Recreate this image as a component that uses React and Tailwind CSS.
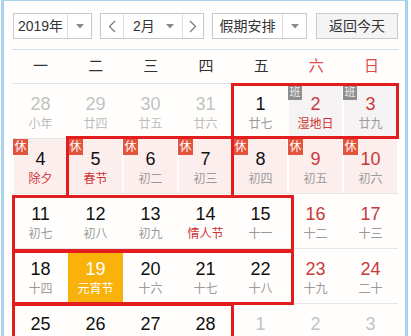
import React from 'react';

const FONT = { fontFamily: '"Liberation Sans", "Noto Sans CJK SC", sans-serif' };

const Caret = () => (
  <svg width="8" height="5" viewBox="0 0 8 5" className="block">
    <path d="M0 0 L8 0 L4 4.5 Z" fill="#8a8a8a" />
  </svg>
);

const Chevron = ({ dir }) => (
  <svg width="8" height="13" viewBox="0 0 8 13" className="block">
    <polyline
      points={dir === 'left' ? '7,1 1.5,6.5 7,12' : '1,1 6.5,6.5 1,12'}
      fill="none"
      stroke="#777"
      strokeWidth="1.2"
    />
  </svg>
);

const WEEK = ['一', '二', '三', '四', '五', '六', '日'];

// kind: o = other month, w = workday (班), r = rest (休), s = selected
const ROWS = [
  [
    { d: 28, l: '小年', k: 'o' },
    { d: 29, l: '廿四', k: 'o' },
    { d: 30, l: '廿五', k: 'o' },
    { d: 31, l: '廿六', k: 'o' },
    { d: 1, l: '廿七' },
    { d: 2, l: '湿地日', k: 'w', red: true, fest: true },
    { d: 3, l: '廿九', k: 'w', red: true },
  ],
  [
    { d: 4, l: '除夕', k: 'r', fest: true },
    { d: 5, l: '春节', k: 'r', fest: true },
    { d: 6, l: '初二', k: 'r' },
    { d: 7, l: '初三', k: 'r' },
    { d: 8, l: '初四', k: 'r' },
    { d: 9, l: '初五', k: 'r', red: true },
    { d: 10, l: '初六', k: 'r', red: true },
  ],
  [
    { d: 11, l: '初七' },
    { d: 12, l: '初八' },
    { d: 13, l: '初九' },
    { d: 14, l: '情人节', fest: true },
    { d: 15, l: '十一' },
    { d: 16, l: '十二', red: true },
    { d: 17, l: '十三', red: true },
  ],
  [
    { d: 18, l: '十四' },
    { d: 19, l: '元宵节', k: 's' },
    { d: 20, l: '十六' },
    { d: 21, l: '十七' },
    { d: 22, l: '十八' },
    { d: 23, l: '十九', red: true },
    { d: 24, l: '二十', red: true },
  ],
  [
    { d: 25, l: '廿一' },
    { d: 26, l: '廿二' },
    { d: 27, l: '廿三' },
    { d: 28, l: '廿四' },
    { d: 1, l: '廿五', k: 'o' },
    { d: 2, l: '廿六', k: 'o' },
    { d: 3, l: '廿七', k: 'o' },
  ],
];

const Cell = ({ c }) => {
  let bg = '';
  if (c.k === 'r') bg = 'bg-[#fdeeee]';
  if (c.k === 'w') bg = 'bg-[#f5f3f3]';
  if (c.k === 's') bg = 'bg-[#f8b20a]';

  let num = 'text-[#111]';
  if (c.red) num = 'text-[#c9383a]';
  if (c.k === 'o') num = 'text-[#c2c2c2]';
  if (c.k === 's') num = 'text-white';

  let lun = 'text-[#9a9a9a]';
  if (c.fest) lun = 'text-[#cf3434]';
  if (c.k === 'o') lun = 'text-[#bdbdbd]';
  if (c.k === 's') lun = 'text-white';

  return (
    <div className={`relative h-full ${c.k === 's' ? '' : 'px-px'}`}>
      <div className={`h-full flex flex-col items-center pt-[9px] ${bg}`}>
        <span className={`text-[18px] leading-[22px] ${num}`}>{c.d}</span>
        <span className={`text-[12px] leading-[16px] mt-px ${lun}`}>{c.l}</span>
      </div>
      {c.k === 'r' && (
        <span className="absolute left-0 top-0 w-[15px] h-[16px] bg-[#e2553d] text-white text-[12px] leading-[16px] text-center">
          休
        </span>
      )}
      {c.k === 'w' && (
        <span className="absolute left-0 top-[1px] w-[14px] h-[15px] bg-[#8e8e8e] text-[#eee] text-[11px] leading-[15px] text-center">
          班
        </span>
      )}
    </div>
  );
};

const Box = ({ cls }) => (
  <div className={`absolute border-[3px] border-[#e31d1d] pointer-events-none ${cls}`} />
);

export default function App() {
  return (
    <div className="w-[411px] h-[336px] overflow-hidden bg-white" style={FONT}>
      <div className="ml-px w-[407px] h-full border-x-[3px] border-t border-[#a9d2ef] bg-[#fffefc] pl-[9px] pt-[12px]">
        {/* toolbar */}
        <div className="flex items-center h-[26px] text-[14px] text-[#333]">
          <div className="flex w-[79px] h-full border border-[#c8c8c8] bg-white">
            <div className="flex-1 flex items-center justify-center border-r border-[#ddd]">2019年</div>
            <div className="w-[23px] flex items-center justify-center"><Caret /></div>
          </div>
          <div className="flex ml-[8px] w-[104px] h-full border border-[#c8c8c8] bg-white">
            <div className="w-[23px] flex items-center justify-center border-r border-[#ddd]"><Chevron dir="left" /></div>
            <div className="flex-1 flex items-center pl-[9px] border-r border-[#ddd]">
              <span>2月</span>
              <span className="ml-auto mr-[8px]"><Caret /></span>
            </div>
            <div className="w-[20px] flex items-center justify-center"><Chevron dir="right" /></div>
          </div>
          <div className="flex ml-[8px] w-[95px] h-full border border-[#c8c8c8] bg-white">
            <div className="flex-1 flex items-center justify-center border-r border-[#ddd]">假期安排</div>
            <div className="w-[23px] flex items-center justify-center"><Caret /></div>
          </div>
          <div className="ml-[9px] w-[82px] h-full border border-[#c8c8c8] bg-[#f4f4f4] flex items-center justify-center">
            返回今天
          </div>
        </div>

        <div className="mt-[10px] -ml-px w-[387px] border-t border-[#cddfea]" />

        {/* week header */}
        <div className="-ml-px w-[387px] h-[34px] border-b border-[#e2e2e2] grid grid-cols-7 pl-px">
          {WEEK.map((w, i) => (
            <div
              key={w}
              className={`flex items-center justify-center text-[15px] ${i > 4 ? 'text-[#e04848]' : 'text-[#333]'}`}
            >
              {w}
            </div>
          ))}
        </div>

        {/* days */}
        <div className="relative w-[385px]">
          {ROWS.map((row, ri) => (
            <div key={ri} className="grid grid-cols-7 h-[55px] border-b border-[#e6e6e6]">
              {row.map((c, ci) => (
                <Cell key={ci} c={c} />
              ))}
            </div>
          ))}
          <Box cls="left-[218px] top-[-1px] w-[168px] h-[56px]" />
          <Box cls="left-[53px] top-[52px] w-[168px] h-[62px]" />
          <Box cls="left-[-1px] top-[111px] w-[282px] h-[57px]" />
          <Box cls="left-[-1px] top-[166px] w-[282px] h-[55px]" />
          <Box cls="left-[-1px] top-[219px] w-[222px] h-[60px]" />
        </div>
      </div>
    </div>
  );
}
